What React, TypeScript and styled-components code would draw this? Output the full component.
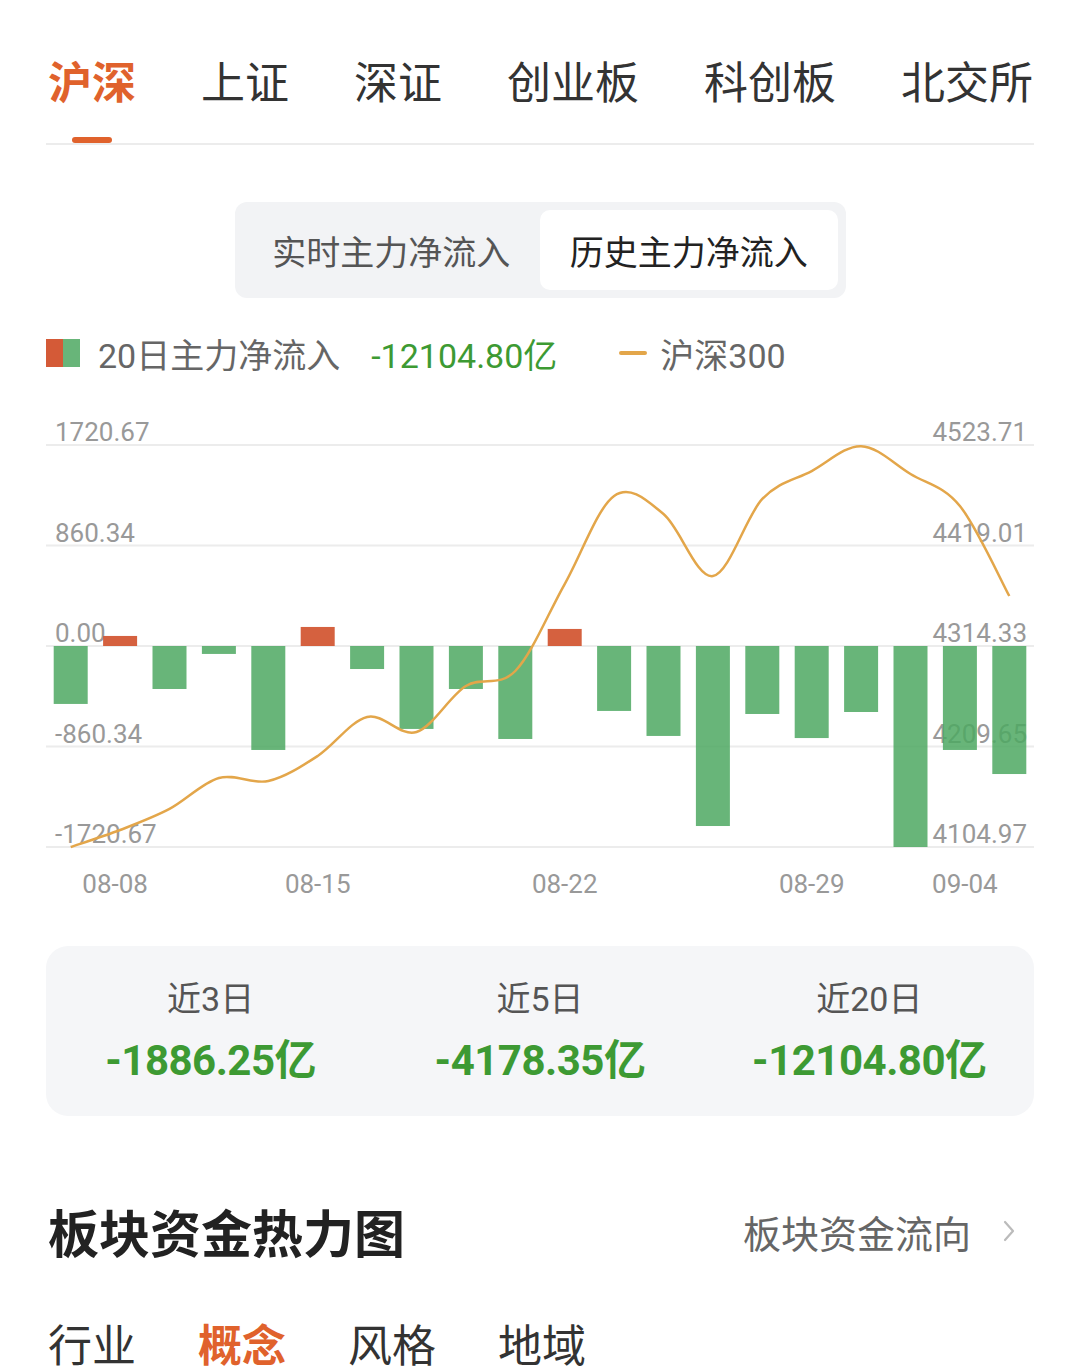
import React from 'react'
import styled, { createGlobalStyle } from 'styled-components'

const orange = '#e0622c'
const green = '#3d9a33'
const font = `Roboto, "Noto Sans CJK SC", sans-serif`

const GlobalStyle = createGlobalStyle`
  body {
    margin: 0;
    background: #fff;
    font-family: ${font};
  }
`

const Page = styled.div`
  width: 1080px;
  height: 1366px;
  overflow: hidden;
  padding: 0 46px;
  box-sizing: border-box;
`

const TabBar = styled.div`
  display: flex;
  gap: 65px;
  padding: 56px 0 0 2px;
  border-bottom: 2px solid #ececec;
`

const Tab = styled.div<{ $active?: boolean }>`
  position: relative;
  font-size: 44px;
  line-height: 56px;
  padding-bottom: 31px;
  color: ${(p) => (p.$active ? orange : '#333')};
  font-weight: ${(p) => (p.$active ? 600 : 400)};
  white-space: nowrap;
`

const Indicator = styled.span`
  position: absolute;
  left: 50%;
  bottom: 0;
  width: 40px;
  height: 6px;
  margin-left: -20px;
  border-radius: 3px;
  background: ${orange};
`

const Segment = styled.div`
  display: flex;
  width: 611px;
  margin: 57px auto 0;
  padding: 8px;
  box-sizing: border-box;
  border-radius: 12px;
  background: #f2f3f5;
`

const SegItem = styled.div<{ $active?: boolean }>`
  flex: 1;
  height: 80px;
  display: flex;
  align-items: center;
  justify-content: center;
  border-radius: 10px;
  font-size: 34px;
  color: ${(p) => (p.$active ? '#222' : '#555')};
  background: ${(p) => (p.$active ? '#fff' : 'transparent')};
`

const Legend = styled.div`
  display: flex;
  align-items: center;
  height: 40px;
  margin-top: 35px;
  font-size: 34px;
  color: #666;
`

const BarSwatch = styled.span`
  display: inline-flex;
  width: 34px;
  height: 28px;
  margin-right: 18px;
  &::before,
  &::after {
    content: '';
    flex: 1;
  }
  &::before {
    background: #d45a37;
  }
  &::after {
    background: #68b579;
  }
`

const LegendValue = styled.span`
  margin-left: 31px;
  color: ${green};
`

const LineSwatch = styled.span`
  width: 28px;
  height: 4px;
  border-radius: 2px;
  background: #e3a64a;
  margin: 0 13px 0 62px;
`

const ChartBox = styled.div`
  margin-top: 36px;
  height: 500px;
`

const SummaryCard = styled.div`
  display: grid;
  grid-template-columns: repeat(3, 1fr);
  margin-top: 37px;
  padding: 31px 0 30px;
  border-radius: 22px;
  background: #f5f6f8;
`

const SummaryCol = styled.div`
  display: flex;
  flex-direction: column;
  align-items: center;
  gap: 15px;
`

const SummaryLabel = styled.div`
  font-size: 34px;
  line-height: 44px;
  color: #555;
`

const SummaryValue = styled.div`
  font-size: 42px;
  line-height: 50px;
  font-weight: 700;
  color: ${green};
  letter-spacing: -0.5px;
`

const SectionHead = styled.div`
  display: flex;
  align-items: center;
  justify-content: space-between;
  margin-top: 85px;
  height: 60px;
`

const SectionTitle = styled.div`
  font-size: 51px;
  font-weight: 700;
  color: #222;
  padding-left: 2px;
`

const MoreLink = styled.div`
  display: flex;
  align-items: center;
  gap: 31px;
  font-size: 38px;
  color: #666;
  padding-right: 18px;
`

const SubTabs = styled.div`
  display: flex;
  gap: 62px;
  margin-top: 58px;
  padding-left: 2px;
`

const SubTab = styled.div<{ $active?: boolean }>`
  font-size: 44px;
  line-height: 56px;
  color: ${(p) => (p.$active ? orange : '#333')};
  font-weight: ${(p) => (p.$active ? 700 : 400)};
`

const flows = [
  -496, 86, -368, -68, -890, 163, -197, -710, -368, -796, 146, -556, -770, -1541, -582, -788, -565, -1720.67, -890, -1096,
]
const index300 = [
  4104.97, 4122.7, 4144.6, 4176.8, 4173.7, 4199.8, 4240.4, 4224.8, 4272.7, 4288.3, 4378.9, 4470.6, 4451.8, 4387.2,
  4467.5, 4496.6, 4522.5, 4493.5, 4460.2, 4366.4,
]
const leftTicks = ['1720.67', '860.34', '0.00', '-860.34', '-1720.67']
const rightTicks = ['4523.71', '4419.01', '4314.33', '4209.65', '4104.97']
const dates = [
  { i: 1, text: '08-08', dx: -5 },
  { i: 5, text: '08-15', dx: 0 },
  { i: 10, text: '08-22', dx: 0 },
  { i: 15, text: '08-29', dx: 0 },
  { i: 18, text: '09-04', dx: 5 },
]

const W = 988
const TOP = 36
const STEP = 100.5
const ZERO = TOP + STEP * 2
const SLOT = W / 20
const BAR = 34

const FlowChart = () => {
  const unit = (STEP * 2) / 1720.67
  const idxMin = 4104.97
  const idxMax = 4523.71
  const pts = index300.map((v, i) => [
    i * SLOT + SLOT / 2,
    TOP + STEP * 4 - ((v - idxMin) / (idxMax - idxMin)) * STEP * 4,
  ])
  // catmull-rom to bezier
  let d = `M${pts[0][0]},${pts[0][1]}`
  for (let i = 0; i < pts.length - 1; i++) {
    const p0 = pts[i - 1] || pts[i]
    const p1 = pts[i]
    const p2 = pts[i + 1]
    const p3 = pts[i + 2] || p2
    const c1x = p1[0] + (p2[0] - p0[0]) / 6
    const c1y = p1[1] + (p2[1] - p0[1]) / 6
    const c2x = p2[0] - (p3[0] - p1[0]) / 6
    const c2y = p2[1] - (p3[1] - p1[1]) / 6
    d += ` C${c1x},${c1y} ${c2x},${c2y} ${p2[0]},${p2[1]}`
  }

  return (
    <svg width={W} height={500} style={{ display: 'block', fontFamily: font }}>
      {leftTicks.map((t, k) => {
        const y = TOP + STEP * k
        return (
          <g key={t}>
            <line x1={0} x2={W} y1={y} y2={y} stroke="#ececec" strokeWidth={2} />
            <text x={9} y={y - 4} fontSize={26} fill="#999">
              {t}
            </text>
            <text x={981} y={y - 4} fontSize={26} fill="#999" textAnchor="end">
              {rightTicks[k]}
            </text>
          </g>
        )
      })}
      {flows.map((v, i) => {
        const h = Math.abs(v) * unit
        const x = i * SLOT + (SLOT - BAR) / 2
        return v >= 0 ? (
          <rect key={i} x={x} y={ZERO - h} width={BAR} height={h} fill="#d1542f" fillOpacity={0.92} />
        ) : (
          <rect key={i} x={x} y={ZERO} width={BAR} height={h} fill="#4ea862" fillOpacity={0.85} />
        )
      })}
      <path d={d} fill="none" stroke="#e3a64a" strokeWidth={2.5} strokeLinejoin="round" />
      {dates.map((dt) => (
        <text
          key={dt.text}
          x={dt.i * SLOT + SLOT / 2 + dt.dx}
          y={484}
          fontSize={26}
          fill="#999"
          textAnchor="middle"
        >
          {dt.text}
        </text>
      ))}
    </svg>
  )
}

const Chevron = () => (
  <svg width="14" height="22" viewBox="0 0 14 22">
    <path d="M3 2 L11 11 L3 20" fill="none" stroke="#bbb" strokeWidth="2.2" strokeLinecap="round" strokeLinejoin="round" />
  </svg>
)

const summary = [
  { label: '近3日', value: '-1886.25亿' },
  { label: '近5日', value: '-4178.35亿' },
  { label: '近20日', value: '-12104.80亿' },
]

const tabs = ['沪深', '上证', '深证', '创业板', '科创板', '北交所']

export default function App() {
  return (
    <>
      <GlobalStyle />
      <Page>
        <TabBar>
          {tabs.map((t, i) => (
            <Tab key={t} $active={i === 0}>
              {t}
              {i === 0 && <Indicator />}
            </Tab>
          ))}
        </TabBar>

        <Segment>
          <SegItem>实时主力净流入</SegItem>
          <SegItem $active>历史主力净流入</SegItem>
        </Segment>

        <Legend>
          <BarSwatch />
          20日主力净流入
          <LegendValue>-12104.80亿</LegendValue>
          <LineSwatch />
          沪深300
        </Legend>

        <ChartBox>
          <FlowChart />
        </ChartBox>

        <SummaryCard>
          {summary.map((s) => (
            <SummaryCol key={s.label}>
              <SummaryLabel>{s.label}</SummaryLabel>
              <SummaryValue>{s.value}</SummaryValue>
            </SummaryCol>
          ))}
        </SummaryCard>

        <SectionHead>
          <SectionTitle>板块资金热力图</SectionTitle>
          <MoreLink>
            板块资金流向
            <Chevron />
          </MoreLink>
        </SectionHead>

        <SubTabs>
          <SubTab>行业</SubTab>
          <SubTab $active>概念</SubTab>
          <SubTab>风格</SubTab>
          <SubTab>地域</SubTab>
        </SubTabs>
      </Page>
    </>
  )
}
